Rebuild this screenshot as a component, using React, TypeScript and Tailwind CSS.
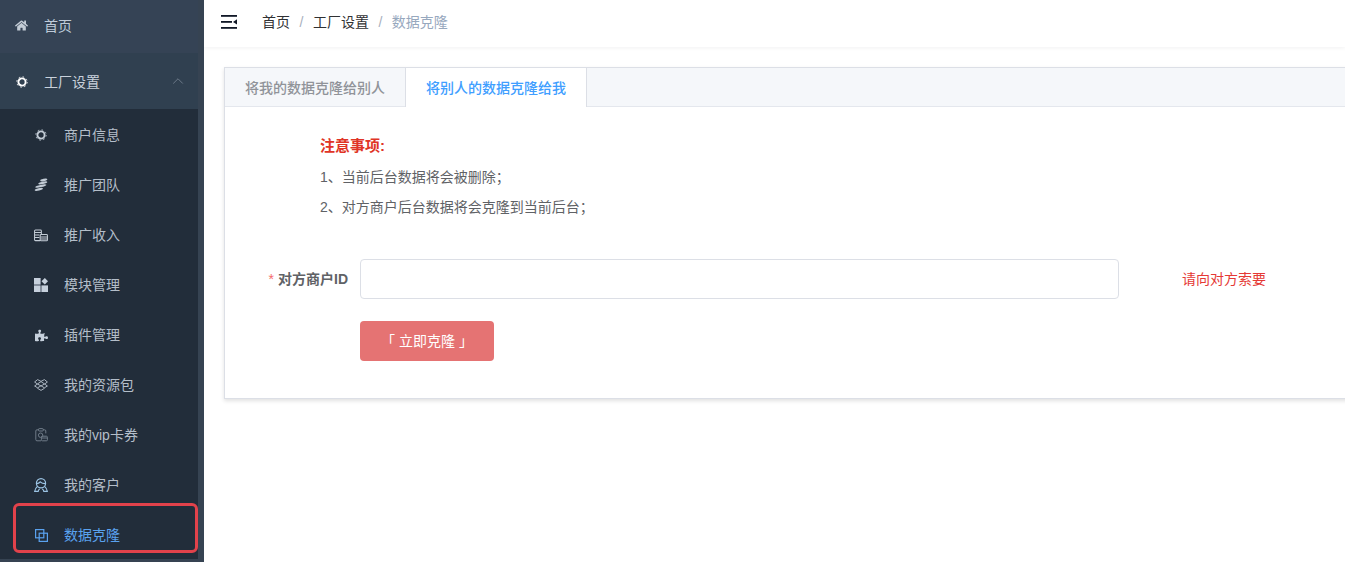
import { FaHome, FaPuzzlePiece } from 'react-icons/fa'
import { ChevronUp } from 'lucide-react'
import type { ReactNode } from 'react'

function GearIcon({ size }: { size: number }) {
  return (
    <svg width={size} height={size} viewBox="0 0 12 12" fill="none">
      <circle cx="6" cy="6" r="3.6" stroke="currentColor" strokeWidth="1.9" />
      <circle cx="6" cy="6" r="5.2" stroke="currentColor" strokeWidth="0.9" strokeDasharray="1.6 2.48" />
    </svg>
  )
}

function CoinsIcon() {
  return (
    <svg width="14" height="14" viewBox="0 0 14 14" fill="currentColor">
      <ellipse cx="9.8" cy="2" rx="3.6" ry="1.2" transform="rotate(-12 9.8 2)" />
      <ellipse cx="8.8" cy="4.9" rx="4.6" ry="1.15" transform="rotate(-12 8.8 4.9)" />
      <ellipse cx="6.8" cy="8" rx="5.8" ry="1.15" transform="rotate(-12 6.8 8)" />
      <ellipse cx="4.8" cy="11.4" rx="4.2" ry="1.2" transform="rotate(-12 4.8 11.4)" />
    </svg>
  )
}

function LedgerIcon() {
  return (
    <svg width="15" height="13" viewBox="0 0 15 13" fill="none" stroke="currentColor" strokeWidth="1.1">
      <path d="M6.5 12H1.6a1 1 0 0 1-1-1V1.6a1 1 0 0 1 1-1h5.3a1 1 0 0 1 1 1V5" />
      <path d="M.8 3.4h6.8M.8 6h5M.8 8.6h5" />
      <rect x="6.6" y="5.4" width="7.8" height="6.8" rx="1" />
      <path d="M6.8 8h7.4M6.8 10.2h7.4" />
    </svg>
  )
}

function ModulesIcon() {
  return (
    <svg width="14" height="14" viewBox="0 0 14 14" fill="currentColor">
      <rect x="0" y="0" width="6.6" height="6.6" />
      <path d="M10.8 0 14 3.3l-3.2 3.3-3.3-3.3Z" />
      <rect x="0" y="7.4" width="6.6" height="6.6" />
      <rect x="7.4" y="7.4" width="6.6" height="6.6" />
    </svg>
  )
}

function PackIcon() {
  return (
    <svg width="14" height="12" viewBox="0 0 14 12" fill="none" stroke="currentColor" strokeWidth="1">
      <path d="M3.6.6 7 2.4 10.4.6 13.4 3 10.6 5l2.8 2-3 1.8L7 6.8 3.6 8.8.6 7l2.8-2L.6 3Z" />
      <path d="M3.4 5 7 2.6 10.6 5 7 6.9Z" />
      <path d="M3.4 9.2 7 11.4l3.6-2.2" />
    </svg>
  )
}

function VipIcon() {
  return (
    <svg width="13" height="14" viewBox="0 0 13 14" fill="none" stroke="currentColor" strokeWidth="1">
      <path d="M4 1.8H2a1.2 1.2 0 0 0-1.2 1.2v8.6A1.2 1.2 0 0 0 2 12.8h4" />
      <path d="M8 1.8h1.6a1.2 1.2 0 0 1 1.2 1.2v2.4" />
      <rect x="3.6" y=".6" width="4.6" height="2.4" rx=".6" />
      <circle cx="5.6" cy="7.2" r="2.2" />
      <rect x="6.4" y="8.2" width="6" height="4.6" rx="1" />
      <path d="M6.6 10h5.6" />
    </svg>
  )
}

function HeadsetIcon() {
  return (
    <svg width="14" height="14" viewBox="0 0 14 14" fill="none" stroke="currentColor" strokeWidth="1.2">
      <circle cx="7" cy="5.2" r="4.6" />
      <path d="M2.6 5.6c1.5-.1 2.8-.7 3.6-1.8 1.2 1.2 3 1.8 5.2 1.8" />
      <path d="M3.4 8.4C1.8 9.8 1 11.2.7 13.3h3.5c.1-1 .7-1.8 1.5-2.3" />
      <path d="M10.6 8.4c1.6 1.4 2.4 2.8 2.7 4.9H9.8c-.1-1-.7-1.8-1.5-2.3" />
    </svg>
  )
}

function CloneIcon() {
  return (
    <svg width="13" height="13" viewBox="0 0 13 13" fill="none" stroke="currentColor" strokeWidth="1.2">
      <rect x=".6" y=".6" width="8.2" height="8.2" />
      <rect x="4.2" y="4.2" width="8.2" height="8.2" />
    </svg>
  )
}

function MenuFoldIcon() {
  return (
    <svg width="16" height="14" viewBox="0 0 16 14" fill="#111827">
      <rect x="0" y="0" width="16" height="1.8" />
      <rect x="0" y="6" width="11" height="1.8" />
      <rect x="0" y="12" width="16" height="1.8" />
      <path d="M16 4.2v5.4l-4-2.7Z" />
    </svg>
  )
}

const subItems: { label: string; icon: ReactNode; tone: string }[] = [
  { label: '商户信息', icon: <GearIcon size={12} />, tone: 'text-[#c3ccd6]' },
  { label: '推广团队', icon: <CoinsIcon />, tone: 'text-[#c3ccd6]' },
  { label: '推广收入', icon: <LedgerIcon />, tone: 'text-[#c3ccd6]' },
  { label: '模块管理', icon: <ModulesIcon />, tone: 'text-[#c6d0dc]' },
  { label: '插件管理', icon: <FaPuzzlePiece size={13} />, tone: 'text-[#c6d0dc]' },
  { label: '我的资源包', icon: <PackIcon />, tone: 'text-[#aab4bf]' },
  { label: '我的vip卡券', icon: <VipIcon />, tone: 'text-[#6f7b88]' },
  { label: '我的客户', icon: <HeadsetIcon />, tone: 'text-[#9cc4e4]' },
]

function Sidebar() {
  return (
    <aside className="relative flex h-[562px] w-[204px] shrink-0 flex-col overflow-hidden bg-[#364352] text-sm">
      <div className="flex h-[53px] w-[198px] items-center bg-[#354355] pb-[2px] pl-[15px] text-[#bfcbd9]">
        <FaHome size={13} className="w-[13px] text-[#c3ccd6]" />
        <span className="ml-4">首页</span>
      </div>
      <div className="flex h-[56px] w-[198px] items-center bg-[#304050] pt-[2px] pl-[15px] pr-[11px] text-[#c8d1db]">
        <span className="flex w-[13px] justify-center text-white">
          <GearIcon size={12} />
        </span>
        <span className="ml-4 flex-1">工厂设置</span>
        <ChevronUp size={18} strokeWidth={0.9} className="-mt-[3px] text-[#8794a3]" />
      </div>
      <ul className="w-[198px] bg-[#222d3a]">
        {subItems.map((item) => (
          <li key={item.label} className="flex h-[50px] items-center pt-[2px] pl-[34px] text-[#b4bec9]">
            <span className={`flex w-[14px] justify-center ${item.tone}`}>{item.icon}</span>
            <span className="ml-4">{item.label}</span>
          </li>
        ))}
        <li className="flex h-[50px] items-center pt-[2px] pl-[34px] text-[#5aa2ef]">
          <span className="flex w-[14px] justify-center">
            <CloneIcon />
          </span>
          <span className="ml-4">数据克隆</span>
        </li>
      </ul>
      <div className="absolute left-[13px] top-[503px] h-[50px] w-[185px] rounded-[6px] border-[3px] border-[#e2424b]" />
    </aside>
  )
}

function Header() {
  return (
    <header className="flex h-[47px] shrink-0 items-center bg-white pb-[3px] pl-[17px] text-sm shadow-[0_1px_4px_rgba(0,21,41,0.06)]">
      <MenuFoldIcon />
      <nav className="ml-[25px] flex items-center text-[#303133]">
        <span>首页</span>
        <span className="mx-[9.5px] text-[#a8b0bd]">/</span>
        <span>工厂设置</span>
        <span className="mx-[9.5px] text-[#a8b0bd]">/</span>
        <span className="text-[#97a8be]">数据克隆</span>
      </nav>
    </header>
  )
}

function CloneCard() {
  return (
    <section className="mt-5 ml-5 h-[332px] w-[1200px] border border-[#dcdfe6] bg-white shadow-[0_2px_4px_rgba(0,0,0,0.12)]">
      <div className="flex h-[39px] border-b border-[#e4e7ed] bg-[#f5f7fa] text-sm font-medium">
        <div className="flex h-[39px] w-[180px] items-center justify-center text-[#909399]">将我的数据克隆给别人</div>
        <div className="flex h-[39px] w-[182px] items-center justify-center border-x border-[#dcdfe6] bg-white text-[#409eff]">
          将别人的数据克隆给我
        </div>
      </div>
      <div className="pl-[95px] pt-[30px]">
        <p className="h-[20px] text-[15px] leading-[18px] font-bold text-[#e03426]">注意事项:</p>
        <p className="mt-[10px] h-[20px] text-sm leading-[20px] text-[#606266]">1、当前后台数据将会被删除；</p>
        <p className="mt-[10px] h-[20px] text-sm leading-[20px] text-[#606266]">2、对方商户后台数据将会克隆到当前后台；</p>
      </div>
      <div className="mt-[42px] flex h-[40px] items-center">
        <label className="w-[123px] text-right text-sm font-bold text-[#606266]">
          <span className="mr-1 font-normal text-[#f56c6c]">*</span>对方商户ID
        </label>
        <input className="ml-3 h-[40px] w-[759px] rounded border border-[#dcdfe6] bg-white outline-none" />
        <span className="ml-[63px] text-sm text-[#e53935]">请向对方索要</span>
      </div>
      <button className="mt-[22px] ml-[135px] h-[40px] w-[134px] rounded bg-[#e57373] text-sm text-white">
        「 立即克隆 」
      </button>
    </section>
  )
}

export default function App() {
  return (
    <div className="flex h-[562px] w-[1345px] overflow-hidden bg-white font-['Liberation_Sans','Noto_Sans_CJK_SC',sans-serif]">
      <Sidebar />
      <main className="flex min-w-0 flex-1 flex-col overflow-hidden">
        <Header />
        <CloneCard />
      </main>
    </div>
  )
}
